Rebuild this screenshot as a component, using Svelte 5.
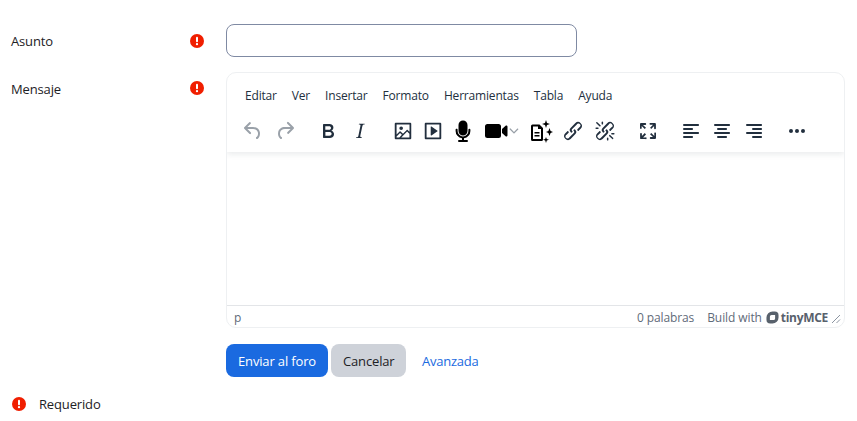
<script>
  const menus = ['Editar', 'Ver', 'Insertar', 'Formato', 'Herramientas', 'Tabla', 'Ayuda'];

  const icons = {
    undo: 'M6.4 8H12c3.7 0 6.2 2 6.8 5.1.6 2.7-.4 5.6-2.3 6.8a1 1 0 0 1-1-1.8c1.1-.6 1.8-2.7 1.4-4.6-.5-2.1-2.1-3.5-4.9-3.5H6.4l3.3 3.3a1 1 0 1 1-1.4 1.4l-5-5a1 1 0 0 1 0-1.4l5-5a1 1 0 0 1 1.4 1.4L6.4 8Z',
    redo: 'M17.6 10H12c-2.8 0-4.4 1.4-4.9 3.5-.4 2 .3 4 1.4 4.6a1 1 0 1 1-1 1.8c-2-1.2-2.9-4.1-2.3-6.8.6-3 3-5.1 6.8-5.1h5.6l-3.3-3.3a1 1 0 1 1 1.4-1.4l5 5a1 1 0 0 1 0 1.4l-5 5a1 1 0 0 1-1.4-1.4l3.3-3.3Z',
    bold: 'M7.8 19c-.3 0-.5 0-.6-.2l-.2-.5V5.7c0-.2 0-.4.2-.5l.6-.2h5c1.5 0 2.7.3 3.5 1 .7.6 1.1 1.4 1.1 2.5a3 3 0 0 1-.6 1.9c-.4.6-1 1-1.6 1.2.4.1.9.3 1.3.6s.8.7 1 1.2c.4.4.5 1 .5 1.6 0 1.3-.4 2.3-1.3 3-.8.7-2.1 1-3.8 1H7.8Zm5-8.3c.6 0 1.2-.1 1.6-.5.4-.3.6-.7.6-1.3 0-1.1-.8-1.7-2.3-1.7H9.3v3.5h3.4Zm.5 6c.7 0 1.3-.1 1.7-.4.4-.4.6-.9.6-1.5s-.2-1-.7-1.4c-.4-.3-1-.4-2-.4H9.4v3.8h4Z',
    italic: 'M16.7 4.7l-.1.9h-.3c-.6 0-1 0-1.4.3-.3.3-.4.6-.5 1.1l-2.1 9.8v.6c0 .5.4.8 1.4.8h.2l-.2.8H8l.2-.8h.2c1.1 0 1.8-.5 2-1.5l2-9.8.1-.5c0-.6-.4-.8-1.4-.8h-.3l.2-.9h5.8Z',
    image: 'M5 15.7l3.3-3.2c.3-.3.7-.3 1 0L12 15l4.1-4c.3-.4.8-.4 1 0l2 1.9V5H5v10.7ZM5 18V19h3l2.8-2.9-2-2L5 17.9Zm14-3l-2.5-2.4-6.4 6.5H19v-4ZM4 3h16c.6 0 1 .4 1 1v16c0 .6-.4 1-1 1H4a1 1 0 0 1-1-1V4c0-.6.4-1 1-1Zm6 8a2 2 0 1 0 0-4 2 2 0 0 0 0 4Z',
    media: 'M4 3h16c.6 0 1 .4 1 1v16c0 .6-.4 1-1 1H4a1 1 0 0 1-1-1V4c0-.6.4-1 1-1Zm1 2v14h14V5H5Zm4.5 2.6c0-.4.4-.6.8-.4l6.6 4.4c.3.2.3.6 0 .8l-6.6 4.4c-.4.2-.8 0-.8-.4V7.6Z',
    mic: 'M12 1.5a4.5 4.5 0 0 0-4.5 4.5v6a4.5 4.5 0 0 0 9 0V6A4.5 4.5 0 0 0 12 1.5ZM5.6 9.8c.6 0 1 .4 1 1V12a5.4 5.4 0 0 0 10.8 0v-1.2a1 1 0 1 1 2 0V12a7.4 7.4 0 0 1-6.4 7.3V21h3a1 1 0 1 1 0 2H8a1 1 0 1 1 0-2h3v-1.7A7.4 7.4 0 0 1 4.600 12v-1.200c0-.6.4-1 1-1Z',
    video: 'M3.500 5h11A2.500 2.500 0 0 1 17 7.500v9a2.500 2.500 0 0 1-2.500 2.500h-11A2.500 2.500 0 0 1 1 16.500v-9A2.500 2.500 0 0 1 3.500 5Zm14.500 5 3.600-3.200c.8-.6 1.900 0 1.900 1v8.400c0 1-1.100 1.600-1.900 1L18 14v-4Z',
    chevron: 'M6.900 9.100a.8.8 0 0 1 1.100 0L12 13.100l4-4a.8.8 0 0 1 1.100 1.100l-4.500 4.500a.8.8 0 0 1-1.200 0l-4.500-4.500a.8.8 0 0 1 0-1.100Z',
    doc: 'M3.500 5.500h7l3.500 3.500v11.500a1.500 1.500 0 0 1-1.500 1.500h-9A1.500 1.500 0 0 1 2 20.500v-13.500a1.500 1.500 0 0 1 1.500-1.500Zm.5 2v12.500h8v-10h-3v-2.500H4Zm1.500 5.500h5v1.500h-5V13Zm0 3h5v1.500h-5V16ZM17 1l1 3 3 1-3 1-1 3-1-3-3-1 3-1 1-3Zm3.500 8 1.100 3 2.400 1-2.400 1-1.100 3-1.100-3-2.400-1 2.400-1 1.100-3Zm-3.500 9 .8 2 2.200.8-2.200.8-.8 2.400-.8-2.400-2.200-.8 2.200-.8.8-2Z',
    link: 'M6.200 12.300a1 1 0 0 1 1.400 1.400l-2 2a2 2 0 1 0 2.600 2.800l4.800-4.800a1 1 0 0 0 0-1.400 1 1 0 1 1 1.400-1.300 2.900 2.900 0 0 1 0 4L9.600 20a3.900 3.900 0 0 1-5.500-5.500l2-2Zm11.600-.6a1 1 0 0 1-1.400-1.400l2-2a2 2 0 1 0-2.600-2.800L11 10.300a1 1 0 0 0 0 1.400A1 1 0 1 1 9.600 13a2.900 2.900 0 0 1 0-4L14.400 4a3.900 3.900 0 0 1 5.500 5.500l-2 2Z',
    unlink: 'M6.200 12.300a1 1 0 0 1 1.400 1.400l-2.100 2a2 2 0 1 0 2.700 2.800l4.800-4.800a1 1 0 0 0 0-1.400 1 1 0 1 1 1.400-1.300 2.900 2.900 0 0 1 0 4L9.600 20a3.900 3.900 0 0 1-5.500-5.500l2-2Zm11.600-.6a1 1 0 0 1-1.400-1.400l2.100-2a2 2 0 1 0-2.700-2.800L11 10.300a1 1 0 0 0 0 1.400A1 1 0 1 1 9.600 13a2.900 2.900 0 0 1 0-4L14.400 4a3.900 3.900 0 0 1 5.500 5.500l-2 2ZM7.600 6.300a.8.8 0 0 1-1 1.100L3.300 4.200a.7.7 0 1 1 1-1l3.200 3.100ZM5.100 8.600a.8.8 0 0 1 0 1.500H3a.8.8 0 0 1 0-1.500H5Zm5-3.500a.8.8 0 0 1-1.500 0V3a.8.8 0 0 1 1.500 0v2Zm6 11.800a.8.8 0 0 1 1-1l3.200 3.200a.8.8 0 0 1-1 1L16 17Zm-2.200 2a.8.8 0 0 1 1.500 0V21a.8.8 0 0 1-1.500 0V19Zm5-3.500a.7.7 0 1 1 0-1.500H21a.8.8 0 0 1 0 1.500H19Z',
    fullscreen: 'M15.300 10l-1.200-1.300 2.900-3h-2.300a.9.9 0 1 1 0-1.700H19c.5 0 .9.4.9.900v4.400a.9.9 0 1 1-1.800 0V7l-2.900 3Zm0 4l3 3v-2.300a.9.9 0 1 1 1.700 0V19c0 .5-.4.9-.9.900h-4.400a.9.9 0 1 1 0-1.800H17l-3-2.900 1.300-1.200ZM10 15.400l-2.900 3h2.300a.9.9 0 1 1 0 1.700H5a.9.9 0 0 1-.9-.9v-4.400a.9.9 0 1 1 1.800 0V17l2.900-3 1.200 1.400ZM8.700 10L5.700 7v2.300a.9.9 0 0 1-1.700 0V5c0-.5.4-.9.9-.9h4.400a.9.9 0 0 1 0 1.800H7l3 2.900-1.300 1.200Z',
    left: 'M5 5h14c.6 0 1 .4 1 1s-.4 1-1 1H5a1 1 0 1 1 0-2Zm0 4h8c.6 0 1 .4 1 1s-.4 1-1 1H5a1 1 0 1 1 0-2Zm0 8h8c.6 0 1 .4 1 1s-.4 1-1 1H5a1 1 0 0 1 0-2Zm0-4h14c.6 0 1 .4 1 1s-.4 1-1 1H5a1 1 0 0 1 0-2Z',
    center: 'M5 5h14c.6 0 1 .4 1 1s-.4 1-1 1H5a1 1 0 1 1 0-2Zm3 4h8c.6 0 1 .4 1 1s-.4 1-1 1H8a1 1 0 1 1 0-2Zm0 8h8c.6 0 1 .4 1 1s-.4 1-1 1H8a1 1 0 0 1 0-2Zm-3-4h14c.6 0 1 .4 1 1s-.4 1-1 1H5a1 1 0 0 1 0-2Z',
    right: 'M5 5h14c.6 0 1 .4 1 1s-.4 1-1 1H5a1 1 0 1 1 0-2Zm6 4h8c.6 0 1 .4 1 1s-.4 1-1 1h-8a1 1 0 0 1 0-2Zm0 8h8c.6 0 1 .4 1 1s-.4 1-1 1h-8a1 1 0 0 1 0-2Zm-6-4h14c.6 0 1 .4 1 1s-.4 1-1 1H5a1 1 0 0 1 0-2Z',
    more: 'M6 10a2 2 0 0 0-2 2c0 1.100.9 2 2 2a2 2 0 0 0 2-2 2 2 0 0 0-2-2Zm12 0a2 2 0 0 0-2 2c0 1.100.9 2 2 2a2 2 0 0 0 2-2 2 2 0 0 0-2-2Zm-6 0a2 2 0 0 0-2 2c0 1.100.9 2 2 2a2 2 0 0 0 2-2 2 2 0 0 0-2-2Z'
  };

  // each group: left margin and the buttons, by width
  const groups = [
    { gap: 0, items: [['undo', 33, 'off'], ['redo', 31, 'off']] },
    { gap: 12, items: [['bold', 32], ['italic', 32]] },
    { gap: 12, items: [['image', 30, 'narrow'], ['media', 30, 'narrow'], ['mic', 30, 'black']] },
    { gap: 3, items: [['video', 30, 'black']] },
    { gap: -4, items: [['chevron', 14, 'off']] },
    { gap: 4, items: [['doc', 31, 'black'], ['link', 33], ['unlink', 31]] },
    { gap: 12, items: [['fullscreen', 32]] },
    { gap: 11, items: [['left', 31], ['center', 32], ['right', 32]] },
    { gap: 11, items: [['more', 32]] }
  ];
</script>

{#snippet required()}
  <svg class="req" viewBox="0 0 14 14" aria-label="Requerido">
    <circle cx="7" cy="7" r="7" fill="#f01e00" />
    <rect x="6" y="2.800" width="2" height="5.400" rx="1" fill="#fff" />
    <circle cx="7" cy="10.200" r="1.150" fill="#fff" />
  </svg>
{/snippet}

<div class="page">
  <div class="row subject">
    <div class="label"><span>Asunto</span>{@render required()}</div>
    <input class="input" type="text" />
  </div>

  <div class="row message">
    <div class="label"><span>Mensaje</span>{@render required()}</div>
    <div class="editor">
      <div class="header">
        <div class="menubar">
          {#each menus as m}
            <span class="menu">{m}</span>
          {/each}
        </div>
        <div class="toolbar">
          {#each groups as g}
            <div class="group" style="margin-left: {g.gap}px">
              {#each g.items as [name, width, tone]}
                <span class="btn {tone ?? ''}" style="width: {width}px">
                  <svg class:small={name === 'chevron'} viewBox="0 0 24 24"><path d={icons[name]} fill-rule="evenodd" /></svg>
                </span>
              {/each}
            </div>
          {/each}
        </div>
      </div>
      <div class="body"></div>
      <div class="status">
        <span class="path">p</span>
        <span class="words">0 palabras</span>
        <span class="build">Build with</span>
        <span class="brand">
          <svg viewBox="0 0 14 14"><path d="M7 .5h2.500A4 4 0 0 1 13.500 4.500v2.500A6.500 6.500 0 0 1 7 13.500H4.500A4 4 0 0 1 .5 9.500V7A6.500 6.500 0 0 1 7 .5Zm-1 3.700a1.800 1.800 0 0 0-1.800 1.800v3.800h3.800a1.800 1.800 0 0 0 1.800-1.800V4.200H6Z" fill-rule="evenodd" /></svg>
          tinyMCE
        </span>
        <svg class="grip" viewBox="0 0 10 10"><path d="M9 1 1 9M9 5.500 5.500 9" stroke="#8b94a0" stroke-width="1" fill="none" /></svg>
      </div>
    </div>
  </div>

  <div class="actions">
    <button class="primary">Enviar al foro</button>
    <button class="secondary">Cancelar</button>
    <a href="#advanced">Avanzada</a>
  </div>

  <div class="legend">
    {@render required()}
    <span>Requerido</span>
  </div>
</div>

<style>
  :global(body) {
    margin: 0;
    background: #fff;
  }
  .page {
    width: 857px;
    height: 421px;
    box-sizing: border-box;
    padding-top: 24px;
    font-family: "Open Sans", "Noto Sans", sans-serif;
    font-size: 13px;
    letter-spacing: -0.15px;
    color: #1d2125;
    overflow: hidden;
  }
  .row {
    display: flex;
    padding-left: 11px;
  }
  .label {
    width: 215px;
    display: flex;
    justify-content: space-between;
    padding-right: 22px;
    box-sizing: border-box;
  }
  .subject .label {
    padding-top: 8px;
  }
  .message {
    margin-top: 15px;
  }
  .message .label {
    padding-top: 8px;
  }
  .message .req {
    margin-top: 1px;
  }
  .req {
    width: 14px;
    height: 14px;
    margin-top: 2px;
    flex: none;
  }
  .input {
    width: 351px;
    height: 33px;
    box-sizing: border-box;
    border: 1px solid #7f8aa3;
    border-radius: 8px;
    background: #fff;
    outline: none;
  }
  .editor {
    width: 619px;
    height: 256px;
    box-sizing: border-box;
    border: 1px solid #eef0f2;
    border-radius: 10px;
    display: flex;
    flex-direction: column;
    overflow: hidden;
  }
  .header {
    height: 79px;
    flex: none;
    box-shadow: 0 2px 6px rgba(34, 47, 62, 0.1);
    position: relative;
    padding: 11px 0 0 9px;
    box-sizing: border-box;
  }
  .menubar {
    display: flex;
    height: 22px;
    align-items: center;
    margin-left: -1px;
    color: #222f3e;
    font-size: 12px;
    letter-spacing: -0.18px;
  }
  .menu {
    padding: 0 8px 0 10px;
    margin-right: -3px;
    white-space: nowrap;
  }
  .toolbar {
    display: flex;
    margin-top: 5px;
    height: 40px;
  }
  .group {
    display: flex;
  }
  .btn {
    height: 40px;
    display: flex;
    align-items: center;
    justify-content: center;
    fill: #222f3e;
    flex: none;
  }
  .btn svg {
    width: 24px;
    height: 24px;
    flex: none;
  }
  .btn.off {
    fill: #9aa1a9;
  }
  .btn.black {
    fill: #000;
  }
  .btn.narrow svg {
    width: 22px;
    height: 22px;
  }
  .btn svg.small {
    width: 20px;
    height: 20px;
  }
  .body {
    flex: 1;
  }
  .status {
    height: 22px;
    flex: none;
    border-top: 1px solid #e3e5e8;
    box-sizing: border-box;
    display: flex;
    align-items: center;
    padding: 2px 3px 0 7px;
    font-size: 12px;
    letter-spacing: -0.1px;
    color: #5f6b79;
  }
  .path {
    margin-right: auto;
  }
  .build {
    margin-left: 13px;
  }
  .brand {
    margin-left: 4px;
    display: flex;
    align-items: center;
    gap: 2px;
    font-weight: 700;
    font-size: 12px;
    letter-spacing: -0.3px;
    color: #58616c;
  }
  .brand svg {
    width: 13px;
    height: 13px;
    fill: #58616c;
  }
  .grip {
    width: 10px;
    height: 10px;
    margin: 3px 0 0 3px;
  }
  .actions {
    display: flex;
    align-items: center;
    margin: 16px 0 0 226px;
  }
  .actions button {
    height: 33px;
    border: none;
    border-radius: 8px;
    font: inherit;
    letter-spacing: inherit;
    padding: 0 12px;
  }
  .primary {
    background: #1a6ae0;
    color: #fff;
  }
  .actions .secondary {
    background: #ced2d9;
    color: #1d2125;
    margin-left: 3px;
    padding: 0 11.5px 0 12px;
  }
  .actions a {
    margin-left: 16px;
    color: #1a6ae0;
    letter-spacing: -0.25px;
    text-decoration: none;
  }
  .legend {
    display: flex;
    align-items: center;
    gap: 13px;
    margin: 18px 0 0 12px;
  }
  .legend .req {
    margin-top: 0;
  }
</style>
